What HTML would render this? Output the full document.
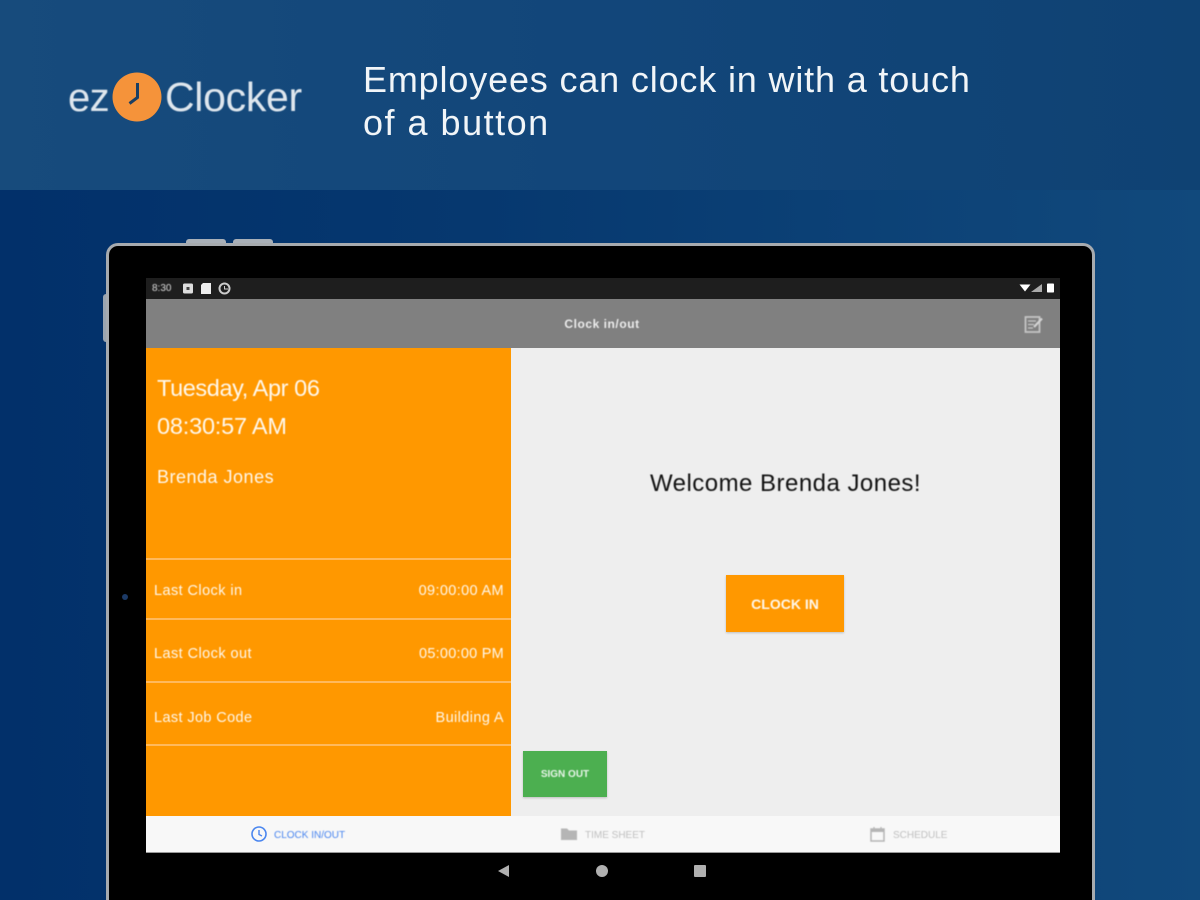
<!DOCTYPE html>
<html lang="en">
<head>
<meta charset="utf-8">
<title>ezClocker</title>
<style>
html,body{margin:0;padding:0;width:1200px;height:900px;overflow:hidden}
body{position:relative;font-family:"Liberation Sans",sans-serif;background:linear-gradient(90deg,#02306a 0%,#06386f 40%,#11497c 100%)}
.a{position:absolute;white-space:nowrap}
.t{color:#fff8ec}
.soft{filter:blur(.4px)}
</style>
</head>
<body>
<div class="a" style="left:0;top:0;width:1200px;height:190px;background:linear-gradient(90deg,#174b7c 0%,#12467a 50%,#0f4273 100%)"></div>

<!-- logo -->
<div class="a soft" style="left:68px;top:76px;font-size:40px;line-height:44px;color:#dfe7ee;letter-spacing:-.6px">ez</div>
<svg class="a" style="left:112px;top:72px" width="50" height="50" viewBox="0 0 50 50"><circle cx="25" cy="25" r="24.500" fill="#f5933a"/><path d="M25.500 11V25.500L17.500 31.500" fill="none" stroke="#1b3f63" stroke-width="3"/></svg>
<div class="a soft" style="left:165px;top:75px;font-size:41px;line-height:45px;color:#dfe7ee;letter-spacing:-.3px">Clocker</div>

<!-- headline -->
<div class="a" style="left:363px;top:58px;font-size:36px;line-height:43px;color:#f1f5f8;letter-spacing:.84px">Employees can clock in with a touch<br><span style="letter-spacing:1.5px">of a button</span></div>

<!-- device -->
<div class="a" style="left:186px;top:239px;width:40px;height:6px;background:#a9b0b8;border-radius:3px 3px 0 0"></div>
<div class="a" style="left:233px;top:239px;width:40px;height:6px;background:#a9b0b8;border-radius:3px 3px 0 0"></div>
<div class="a" style="left:103px;top:294px;width:5px;height:48px;background:#9ba5b0;border-radius:3px 0 0 3px"></div>
<div class="a" style="left:106px;top:243px;width:983px;height:654px;background:#000;border:3px solid #a7abaf;border-bottom:0;border-radius:12px 12px 0 0"></div>
<div class="a" style="left:122px;top:594px;width:6px;height:6px;border-radius:50%;background:#1c3a66"></div>

<!-- status bar -->
<div class="a" style="left:146px;top:278px;width:914px;height:21px;background:#1e1e1e"></div>
<div class="a soft" style="left:152px;top:283px;font-size:10px;line-height:11px;color:#ddd">8:30</div>
<svg class="a" style="left:182px;top:282px" width="50" height="14" viewBox="0 0 50 14"><rect x="1" y="1.500" width="10" height="10" rx="1.500" fill="#ddd"/><rect x="4.500" y="5" width="3" height="3" fill="#444"/><path d="M19 3L21 1H29V12H19Z" fill="#eee"/><circle cx="42.500" cy="6.500" r="5" fill="none" stroke="#ccc" stroke-width="2"/><path d="M42.500 4V7H46" fill="none" stroke="#ccc" stroke-width="1"/></svg>
<svg class="a" style="left:1018px;top:281px" width="38" height="14" viewBox="0 0 38 14"><path d="M1.500 3.500H12.500L7 10.500Z" fill="#fff"/><path d="M13 11L24 3V11Z" fill="#aaa"/><rect x="29" y="2.500" width="7" height="9" rx=".8" fill="#fff"/></svg>

<!-- app bar -->
<div class="a" style="left:146px;top:299px;width:914px;height:49px;background:#808080"></div>
<div class="a soft" style="left:146px;top:317px;width:912px;text-align:center;font-size:12px;line-height:14px;font-weight:bold;letter-spacing:.55px;color:#ececec">Clock in/out</div>
<svg class="a soft" style="left:1023px;top:314px" width="22" height="20" viewBox="0 0 22 20"><rect x="2.500" y="3" width="14" height="15" fill="none" stroke="#c4c4c4" stroke-width="1.800"/><path d="M5 7H13M5 10.500H11M5 14H10" stroke="#c4c4c4" stroke-width="1.300"/><path d="M11 13L19 4.500" stroke="#d2d2d2" stroke-width="2.200"/></svg>

<!-- left panel -->
<div class="a" style="left:146px;top:348px;width:365px;height:468px;background:#ff9800"></div>
<div class="a t soft" style="left:157px;top:374px;font-size:23.500px;line-height:28px;letter-spacing:-.4px">Tuesday, Apr 06</div>
<div class="a t soft" style="left:157px;top:412px;font-size:23.500px;line-height:28px;letter-spacing:-.2px">08:30:57 AM</div>
<div class="a t soft" style="left:157px;top:466px;font-size:18px;line-height:22px;letter-spacing:.5px">Brenda Jones</div>

<div class="a" style="left:146px;top:558px;width:365px;height:2px;background:#ffb95c"></div>
<div class="a" style="left:146px;top:618px;width:365px;height:2px;background:#ffb95c"></div>
<div class="a" style="left:146px;top:681px;width:365px;height:2px;background:#ffb95c"></div>
<div class="a" style="left:146px;top:744px;width:365px;height:2px;background:#ffb95c"></div>

<div class="a t soft" style="left:154px;top:582px;font-size:14.500px;line-height:18px;letter-spacing:.42px">Last Clock in</div>
<div class="a t soft" style="right:696px;top:582px;font-size:14.500px;line-height:18px;letter-spacing:.36px">09:00:00 AM</div>
<div class="a t soft" style="left:154px;top:645px;font-size:14.500px;line-height:18px;letter-spacing:.43px">Last Clock out</div>
<div class="a t soft" style="right:696px;top:645px;font-size:14.500px;line-height:18px;letter-spacing:.25px">05:00:00 PM</div>
<div class="a t soft" style="left:154px;top:709px;font-size:14.500px;line-height:18px;letter-spacing:.38px">Last Job Code</div>
<div class="a t soft" style="right:696px;top:709px;font-size:14.500px;line-height:18px;letter-spacing:.4px">Building A</div>

<!-- right panel -->
<div class="a" style="left:511px;top:348px;width:549px;height:468px;background:#eeeeee"></div>
<div class="a soft" style="left:511px;top:469px;width:549px;text-align:center;font-size:24px;line-height:30px;letter-spacing:.48px;color:#111">Welcome Brenda Jones!</div>
<div class="a" style="left:726px;top:575px;width:118px;height:57px;background:#ff9800;box-shadow:0 1px 2px rgba(0,0,0,.2)"></div>
<div class="a t soft" style="left:726px;top:596px;width:118px;text-align:center;font-size:14px;line-height:17px;font-weight:bold">CLOCK IN</div>
<div class="a" style="left:523px;top:751px;width:84px;height:46px;background:#4caf50;box-shadow:0 1px 2px rgba(0,0,0,.2)"></div>
<div class="a soft" style="left:523px;top:769px;width:84px;text-align:center;font-size:10px;line-height:12px;font-weight:bold;color:#e8f5e9">SIGN OUT</div>

<!-- bottom tabs -->
<div class="a" style="left:146px;top:816px;width:914px;height:37px;background:#f8f8f8;border-bottom:1px solid #999;box-sizing:border-box"></div>
<svg class="a" style="left:250px;top:825px" width="18" height="18" viewBox="0 0 18 18"><circle cx="9" cy="9" r="7" fill="none" stroke="#4a86ef" stroke-width="1.600"/><path d="M9 5V9.500L12 11" fill="none" stroke="#4a86ef" stroke-width="1.400"/></svg>
<div class="a soft" style="left:274px;top:830px;font-size:10px;line-height:12px;color:#4a86ef">CLOCK IN/OUT</div>
<svg class="a soft" style="left:560px;top:826px" width="18" height="16" viewBox="0 0 18 16"><path d="M1 2.500H7L9 4.500H17V14H1Z" fill="#b5b5b5"/></svg>
<div class="a soft" style="left:585px;top:830px;font-size:10px;line-height:12px;color:#c0c0c0">TIME SHEET</div>
<svg class="a soft" style="left:869px;top:826px" width="17" height="17" viewBox="0 0 17 17"><rect x="2" y="3" width="13" height="12" fill="none" stroke="#b5b5b5" stroke-width="1.500"/><rect x="2" y="3" width="13" height="3" fill="#b5b5b5"/><path d="M5 1V4M12 1V4" stroke="#b5b5b5" stroke-width="1.300"/></svg>
<div class="a soft" style="left:893px;top:830px;font-size:10px;line-height:12px;color:#c0c0c0">SCHEDULE</div>

<!-- nav bar -->
<svg class="a" style="left:490px;top:860px" width="225" height="22" viewBox="0 0 225 22"><path d="M8 11L19 5V17Z" fill="#b0b0b0"/><circle cx="112" cy="11" r="6" fill="#b0b0b0"/><rect x="204" y="5" width="12" height="12" rx="1" fill="#b0b0b0"/></svg>
</body>
</html>
